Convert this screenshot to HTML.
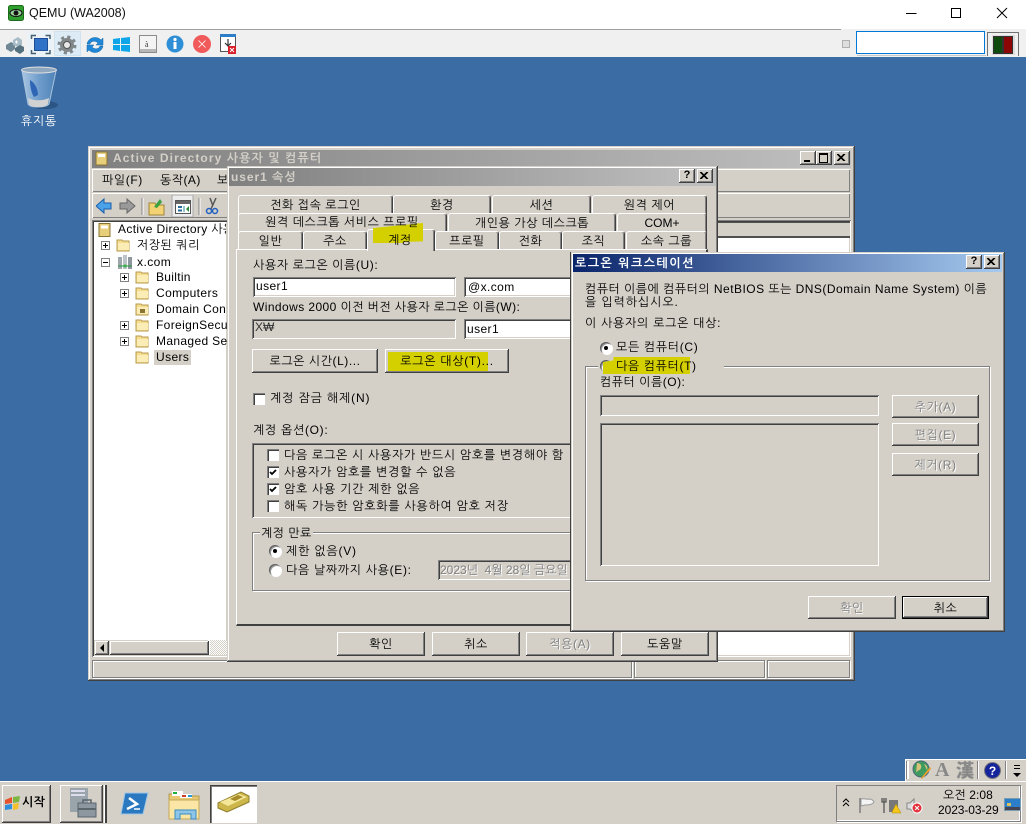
<!DOCTYPE html>
<html lang="ko"><head><meta charset="utf-8"><title>QEMU (WA2008)</title>
<style>
html,body{margin:0;padding:0}
body{width:1026px;height:824px;position:relative;overflow:hidden;background:#3b6ca3;font-family:"Liberation Sans","NanumGothic","Noto Sans CJK KR",sans-serif;font-size:12px;color:#000}
div,svg,span.a{position:absolute}
.t{position:absolute;white-space:nowrap;line-height:14px;height:14px}
.c{text-align:center}
.bg{background:#d4d0c8}
.win{background:#d4d0c8;box-shadow:inset -1px -1px #404040,inset 1px 1px #d4d0c8,inset -2px -2px #808080,inset 2px 2px #fff}
.btn{background:#d4d0c8;box-shadow:inset -1px -1px #404040,inset 1px 1px #fff,inset -2px -2px #808080;text-align:center;line-height:24px;letter-spacing:.6px}
.sunk{background:#fff;box-shadow:inset 1px 1px #808080,inset -1px -1px #fff,inset 2px 2px #404040,inset -2px -2px #d4d0c8}
.etch{border:1px solid #808080;box-shadow:1px 1px #fff,inset 1px 1px #fff;box-sizing:border-box;background:transparent}
.tab{background:#d4d0c8;border-top:1px solid #fff;border-left:1px solid #fff;border-right:1px solid #404040;box-shadow:inset -1px 0 #808080;border-radius:3px 3px 0 0;box-sizing:border-box;text-align:center;line-height:18px;letter-spacing:.55px}
.hl{background:#d4d000}
.dis{color:#808080;text-shadow:1px 1px #fff}
.cb{width:12px;height:12px;background:#fff;box-shadow:inset 1px 1px #808080,inset 2px 2px #404040,inset -1px -1px #fff}
.rd{width:12px;height:12px;border-radius:50%;background:#fff;box-shadow:inset 1px 1px #606060,inset 2px 2px #9a9a9a,1px 1px #fff}
.dot{left:4px;top:4px;width:4px;height:4px;border-radius:50%;background:#000}
.cap{width:16px;height:14px;background:#d4d0c8;box-shadow:inset -1px -1px #404040,inset 1px 1px #fff,inset -2px -2px #808080;font:bold 11px/13px "Liberation Sans",sans-serif;text-align:center}
.pm{width:9px;height:9px;background:#fff;border:1px solid #808080;box-sizing:border-box}
.pm:before{content:"";position:absolute;left:1px;top:3px;width:5px;height:1px;background:#000}
.pm.p:after{content:"";position:absolute;left:3px;top:1px;width:1px;height:5px;background:#000}
</style></head><body>
<svg width="0" height="0" style="left:0;top:0"><defs>
<symbol id="folder" viewBox="0 0 15 14"><path d="M1 2h5l1 1h6v10H1z" fill="#f6dc8f" stroke="#b79b4e"/><path d="M2 5h11v7H2z" fill="#fcedb7"/></symbol>
<symbol id="x" viewBox="0 0 9 7"><path d="M0 0l7 7M1 0l7 7M7 0L0 7M8 0L1 7" stroke="#000" fill="none"/></symbol>
</defs></svg>

<!-- top chrome -->
<div style="left:0;top:0;width:1026px;height:29px;background:#fff"></div>
<div style="left:0;top:29px;width:841px;height:1px;background:#a0a0a0"></div>
<div style="left:841px;top:29px;width:185px;height:1px;background:#f0f0f0"></div>
<div style="left:0;top:30px;width:1026px;height:27px;background:#f0f0f0"></div>
<svg style="left:8px;top:5px" width="16" height="16" viewBox="0 0 16 16"><rect x="0.5" y="0.5" width="15" height="15" rx="2" fill="#2f9e2f" stroke="#1b6a1b"/><ellipse cx="8" cy="8" rx="6" ry="3.5" fill="#9fd49f" stroke="#111"/><circle cx="8" cy="8" r="2.5" fill="#111"/></svg>
<div class="t" style="left:29px;top:6px;font-size:12.5px;color:#111">QEMU (WA2008)</div>
<svg style="left:900px;top:0" width="120" height="26" viewBox="0 0 120 26" fill="none" stroke="#000"><path d="M6 13.5H16.5"/><rect x="51.5" y="8.5" width="9" height="9"/><path d="M97 8l10 10M107 8l-10 10"/></svg>

<!-- toolbar icons -->
<div style="left:27px;top:31px;width:26px;height:25px;background:#eaf1f7"></div>
<div style="left:54px;top:31px;width:27px;height:25px;background:#dcebf5;box-shadow:inset 0 0 0 1px #cfe2f0"></div>
<svg style="left:4px;top:34px" width="240" height="22" viewBox="0 0 240 22">
<path d="M2 11l5-3 4 2v5l-4 3-5-3z" fill="#6f8794"/><path d="M9 6l5-3 4 3v5l-4 2-5-2z" fill="#a8bcc8"/><path d="M11 14l5-3 4 2v4l-4 3-5-3z" fill="#55707e"/><path d="M11 8h3M12.500 6.500v3" stroke="#fff"/>
<rect x="30.500" y="4.500" width="13" height="12" fill="#2f72c8" stroke="#1d4e95"/><path d="M27.500 5V1.500H32M41.500 1.500H46V5M46 16v3.500h-4.500M32 19.500h-4.500V16" fill="none" stroke="#45606f" stroke-width="1.500"/>
<circle cx="63" cy="11" r="7" fill="#82878a"/><circle cx="63" cy="11" r="8" fill="none" stroke="#82878a" stroke-width="3" stroke-dasharray="3.100 3.180"/><circle cx="63" cy="11" r="3.500" fill="#e8e8e8" stroke="#555"/>
<path d="M83 10c1-6 9-9 14-4l2-2v7h-7l2-2c-3-3-7-2-8 1zM99 12c-1 6-9 9-14 4l-2 2v-7h7l-2 2c3 3 7 2 8-1z" fill="#1f87d8" stroke="#14659f" stroke-width=".5"/>
<path d="M109 5l7-1v6h-7zM117 4l9-1v7h-9zM109 11h7v6l-7-1zM117 11h9v7l-9-1z" fill="#0ea5e9"/>
<rect x="135.500" y="1.500" width="17" height="17" fill="#f4f4f4" stroke="#8c8c8c"/><rect x="136" y="15" width="16" height="3" fill="#b8b8b8"/><text x="141" y="13" font-size="8" font-family="Liberation Serif" fill="#333">à</text>
<circle cx="171" cy="10" r="8.500" fill="#2f8fd6"/><rect x="169.500" y="8" width="3" height="7" fill="#fff"/><circle cx="171" cy="5.500" r="1.600" fill="#fff"/>
<circle cx="198" cy="10" r="9" fill="#f05a5a"/><path d="M194.500 6.500l7 7M201.500 6.500l-7 7" stroke="#fff" stroke-width=".8"/>
<rect x="216.500" y="0.500" width="15" height="17" fill="#fff" stroke="#555"/><rect x="216" y="0" width="16" height="3" fill="#2f7fc8"/><path d="M224 5v7M221 9l3 3 3-3" stroke="#333" fill="none" stroke-width="1.200"/><rect x="224" y="12" width="8" height="8" fill="#d8202a"/><path d="M226 14l4 4M230 14l-4 4" stroke="#fff"/>
</svg>
<div style="left:842px;top:40px;width:6px;height:6px;border:1px solid #b0b0b0;background:#dedede"></div>
<div style="left:856px;top:31px;width:127px;height:21px;border:1px solid #0078d7;background:#fff"></div>
<div style="left:857px;top:55px;width:129px;height:1px;background:#c8c8c8"></div>
<div style="left:987px;top:32px;width:32px;height:24px;border-top:1px solid #707070;border-left:1px solid #707070;border-right:1px solid #707070;box-sizing:border-box;background:#f0f0f0"></div>
<div style="left:992px;top:35px;width:23px;height:20px;background:#dcdcdc"></div>
<div style="left:994px;top:37px;width:8px;height:16px;background:#0f4a0f;box-shadow:0 0 0 1px #333"></div>
<div style="left:1004px;top:37px;width:8px;height:16px;background:#8c0606;box-shadow:0 0 0 1px #333"></div>

<!-- desktop icon -->
<svg style="left:20px;top:65px" width="38" height="46" viewBox="0 0 38 46">
<defs><linearGradient id="bin" x1="0" x2="1" y1="0" y2="0"><stop offset="0" stop-color="#a9c6e2"/><stop offset=".5" stop-color="#6f9dcb"/><stop offset="1" stop-color="#4f82b8"/></linearGradient></defs>
<ellipse cx="24" cy="40" rx="14" ry="4" fill="#2b5585"/>
<path d="M2 6L8 39c2 4 18 4 21 0L36 6z" fill="url(#bin)" stroke="#a9c4de"/>
<path d="M10 15c5 3 8 9 8 15l-4 2c-3-5-4-11-4-17z" fill="#2e66b5"/>
<path d="M8 33c6 3 14 3 21 0l-1 6c-3 4-17 4-19 0z" fill="#d2d2d2"/>
<ellipse cx="19" cy="5" rx="17.500" ry="3" fill="#8fa8bf" stroke="#e0e0e0"/>
</svg>
<div class="t c" style="left:9px;top:114px;width:60px;color:#fff;font-size:12px;letter-spacing:.8px">휴지통</div>

<!-- AD window -->
<div class="win" style="left:88px;top:146px;width:767px;height:535px"></div>
<div style="left:92px;top:150px;width:759px;height:18px;background:linear-gradient(90deg,#808080,#c0c0c0)"></div>
<svg style="left:95px;top:151px" width="14" height="15" viewBox="0 0 14 15"><rect x="1" y="1" width="11" height="13" fill="#e8cf7c" stroke="#8a7434"/><rect x="3" y="3" width="7" height="3" fill="#fff"/></svg>
<div class="t" style="left:113px;top:151px;font-weight:bold;color:#d4d0c8;letter-spacing:1.08px">Active Directory 사용자 및 컴퓨터</div>
<div class="cap" style="left:800px;top:151px;"><div style="left:4px;top:9px;width:6px;height:2px;background:#000"></div></div>
<div class="cap" style="left:816px;top:151px"><div style="left:3px;top:2px;width:7px;height:7px;border:1px solid #000;border-top-width:2px"></div></div>
<div class="cap" style="left:834px;top:151px"><svg style="left:3px;top:3px" width="9" height="7"><use href="#x"/></svg></div>
<div style="left:92px;top:169px;width:758px;height:23px;box-shadow:inset 1px 1px #fff,inset -1px -1px #808080"></div>
<div style="left:92px;top:193px;width:758px;height:25px;box-shadow:inset 1px 1px #fff,inset -1px -1px #808080"></div>
<div class="t" style="left:102px;top:173px;letter-spacing:.6px">파일(F)</div>
<div class="t" style="left:160px;top:173px;letter-spacing:.45px">동작(A)</div>
<div class="t" style="left:217px;top:173px">보</div>
<svg style="left:96px;top:195px" width="130" height="22" viewBox="0 0 130 22">
<path d="M0 11l8-7v4h7v6H8v4z" fill="#4aa3e8" stroke="#1c5ea8"/>
<path d="M39 11l-8-7v4h-7v6h7v4z" fill="#9a9a9a" stroke="#666"/>
<path d="M46 3v17" stroke="#808080"/><path d="M47 3v17" stroke="#fff"/>
<path d="M53 8h6l1 2h8v10H53z" fill="#f2d272" stroke="#a0853a"/><path d="M58 12l6-8 2 3-5 6z" fill="#3aa040"/>
<rect x="76" y="0" width="21" height="22" fill="#ececec" stroke="#a8a8a8"/><rect x="79.500" y="5.500" width="15" height="13" fill="#fff" stroke="#555"/><rect x="80" y="6" width="14" height="3" fill="#666"/><path d="M88 11v6" stroke="#2a8a9a"/><path d="M93 11l-3 3 3 3z" fill="#2a8a3a"/><rect x="82" y="11" width="4" height="2" fill="#2a6a9a"/><rect x="82" y="14.500" width="4" height="2" fill="#2a6a9a"/>
<path d="M103 3v17" stroke="#808080"/><path d="M104 3v17" stroke="#fff"/>
<path d="M120 3l-5 11M114 3l3 8" stroke="#555" stroke-width="1.500"/><circle cx="113" cy="16" r="2.500" fill="none" stroke="#2060c0" stroke-width="1.500"/><circle cx="119" cy="16" r="2.500" fill="none" stroke="#2060c0" stroke-width="1.500"/>
</svg>

<!-- tree -->
<div class="sunk" style="left:92px;top:220px;width:136px;height:437px"></div>
<svg style="left:98px;top:223px" width="14" height="14" viewBox="0 0 14 14"><rect x="1" y="0.500" width="11" height="13" fill="#e8cf7c" stroke="#8a7434"/><rect x="3" y="2.500" width="7" height="3" fill="#fff"/></svg>
<div class="t" style="left:118px;top:222px;letter-spacing:.35px;width:108px;overflow:hidden">Active Directory 사용</div>
<div class="pm p" style="left:101px;top:241px"></div>
<svg style="left:116px;top:238px" width="15" height="14"><use href="#folder"/></svg>
<div class="t" style="left:137px;top:238px;letter-spacing:.5px">저장된 쿼리</div>
<div class="pm" style="left:101px;top:258px"></div>
<svg style="left:117px;top:254px" width="16" height="16" viewBox="0 0 16 16"><rect x="1" y="3" width="4" height="12" fill="#9da7ad"/><rect x="6" y="1" width="4" height="14" fill="#bcc4c9"/><rect x="11" y="3" width="4" height="12" fill="#8d979d"/><path d="M1 12h14" stroke="#2a9a3a"/><circle cx="8" cy="12" r="1.500" fill="#38b048"/></svg>
<div class="t" style="left:137px;top:255px;letter-spacing:.45px">x.com</div>
<div class="pm p" style="left:120px;top:273px"></div>
<svg style="left:135px;top:270px" width="15" height="14"><use href="#folder"/></svg>
<div class="t" style="left:156px;top:270px;letter-spacing:.3px">Builtin</div>
<div class="pm p" style="left:120px;top:289px"></div>
<svg style="left:135px;top:286px" width="15" height="14"><use href="#folder"/></svg>
<div class="t" style="left:156px;top:286px;letter-spacing:.4px">Computers</div>
<svg style="left:135px;top:302px" width="15" height="14"><use href="#folder"/><rect x="5" y="7" width="5" height="4" fill="#8a7434"/></svg>
<div class="t" style="left:156px;top:302px;letter-spacing:.35px;width:71px;overflow:hidden">Domain Con</div>
<div class="pm p" style="left:120px;top:321px"></div>
<svg style="left:135px;top:318px" width="15" height="14"><use href="#folder"/></svg>
<div class="t" style="left:156px;top:318px;letter-spacing:.35px;width:71px;overflow:hidden">ForeignSecu</div>
<div class="pm p" style="left:120px;top:337px"></div>
<svg style="left:135px;top:334px" width="15" height="14"><use href="#folder"/></svg>
<div class="t" style="left:156px;top:334px;letter-spacing:.35px;width:71px;overflow:hidden">Managed Se</div>
<svg style="left:135px;top:350px" width="15" height="14"><use href="#folder"/></svg>
<div style="left:154px;top:350px;width:37px;height:15px;background:#d4d0c8"></div>
<div class="t" style="left:156px;top:350px;letter-spacing:.4px">Users</div>
<!-- tree scrollbar -->
<div style="left:94px;top:640px;width:114px;height:15px;background:#d4d0c8"></div>
<div class="btn" style="left:95px;top:641px;width:14px;height:14px"><div style="left:5px;top:3px;width:0;height:0;border:4px solid transparent;border-right-color:#000;border-left:0"></div></div>
<div class="btn" style="left:110px;top:641px;width:99px;height:14px"></div>
<div style="left:210px;top:640px;width:17px;height:15px;background:repeating-conic-gradient(#fff 0 25%,#d4d0c8 0 50%) 0 0/2px 2px"></div>

<!-- right list -->
<div class="sunk" style="left:716px;top:220px;width:135px;height:437px"></div>
<div style="left:716px;top:222px;width:134px;height:16px;background:#d4d0c8;border-top:1px solid #505050;border-bottom:2px solid #505050;box-sizing:border-box"></div>
<!-- status bar -->
<div class="etch" style="left:92px;top:660px;width:540px;height:18px"></div>
<div class="etch" style="left:634px;top:660px;width:131px;height:18px"></div>
<div class="etch" style="left:767px;top:660px;width:83px;height:18px"></div>

<!-- properties dialog -->
<div class="win" style="left:227px;top:166px;width:491px;height:496px"></div>
<div style="left:229px;top:168px;width:487px;height:18px;background:linear-gradient(90deg,#808080,#c0c0c0)"></div>
<div class="t" style="left:231px;top:170px;font-weight:bold;color:#d4d0c8;letter-spacing:.95px">user1 속성</div>
<div class="cap" style="left:679px;top:169px">?</div>
<div class="cap" style="left:697px;top:169px"><svg style="left:3px;top:3px" width="9" height="7"><use href="#x"/></svg></div>

<div class="tab" style="left:238px;top:195px;width:155px;height:20px">전화 접속 로그인</div>
<div class="tab" style="left:393px;top:195px;width:98px;height:20px">환경</div>
<div class="tab" style="left:492px;top:195px;width:99px;height:20px">세션</div>
<div class="tab" style="left:592px;top:195px;width:115px;height:20px">원격 제어</div>
<div class="tab" style="left:238px;top:213px;width:209px;height:20px"></div>
<div class="tab" style="left:448px;top:213px;width:168px;height:20px">개인용 가상 데스크톱</div>
<div class="tab" style="left:617px;top:213px;width:90px;height:20px;letter-spacing:0">COM+</div>
<div class="tab" style="left:238px;top:231px;width:65px;height:19px">일반</div>
<div class="tab" style="left:303px;top:231px;width:64px;height:19px">주소</div>
<div class="tab" style="left:435px;top:231px;width:64px;height:19px">프로필</div>
<div class="tab" style="left:499px;top:231px;width:63px;height:19px">전화</div>
<div class="tab" style="left:562px;top:231px;width:63px;height:19px">조직</div>
<div class="tab" style="left:626px;top:231px;width:81px;height:19px">소속 그룹</div>
<!-- tab panel -->
<div style="left:236px;top:249px;width:472px;height:377px;background:#d4d0c8;box-sizing:border-box;border-top:1px solid #fff;border-left:1px solid #fff;border-right:2px solid #404040;border-bottom:2px solid #404040"></div>
<div class="tab" style="left:367px;top:229px;width:68px;height:22px;border-radius:3px 3px 0 0"></div>
<div class="hl" style="left:373px;top:223px;width:50px;height:20px;clip-path:polygon(0 25%,100% 0,100% 92%,60% 95%,60% 100%,0 100%)"></div>
<div class="t c" style="left:238px;top:215px;width:208px;letter-spacing:.55px">원격 데스크톱 서비스 프로필</div>
<div class="t c" style="left:367px;top:233px;width:66px;letter-spacing:.55px">계정</div>

<div class="t" style="left:253px;top:258px;letter-spacing:.6px">사용자 로그온 이름(U):</div>
<div class="sunk t" style="left:253px;top:277px;width:203px;height:20px;line-height:19px;text-indent:3px;letter-spacing:.4px">user1</div>
<div class="sunk t" style="left:464px;top:277px;width:108px;height:20px;line-height:20px;text-indent:4px;letter-spacing:.4px">@x.com</div>
<div class="t" style="left:253px;top:300px;letter-spacing:.42px">Windows 2000 이전 버전 사용자 로그온 이름(W):</div>
<div class="sunk t" style="left:252px;top:319px;width:204px;height:20px;line-height:17px;text-indent:3px;background:#d4d0c8;color:#333">X₩</div>
<div class="sunk t" style="left:464px;top:319px;width:108px;height:20px;line-height:20px;text-indent:3px;letter-spacing:.4px">user1</div>
<div class="btn" style="left:252px;top:349px;width:126px;height:24px;letter-spacing:.55px">로그온 시간(L)...</div>
<div class="btn" style="left:385px;top:349px;width:124px;height:24px"></div>
<div class="hl" style="left:388px;top:352px;width:100px;height:19px"></div>
<div class="t c" style="left:385px;top:354px;width:124px;letter-spacing:.7px">로그온 대상(T)...</div>
<div class="cb" style="left:253px;top:393px"></div>
<div class="t" style="left:270px;top:391px;letter-spacing:.85px">계정 잠금 해제(N)</div>
<div class="t" style="left:253px;top:423px;letter-spacing:.7px">계정 옵션(O):</div>
<div class="sunk" style="left:252px;top:443px;width:320px;height:75px;background:#d4d0c8"></div>
<div class="cb" style="left:267px;top:449px"></div><div class="t" style="left:284px;top:448px;letter-spacing:.7px">다음 로그온 시 사용자가 반드시 암호를 변경해야 함</div>
<div class="cb" style="left:267px;top:466px"><svg width="12" height="12" style="left:0;top:0"><path d="M3 6l2 2 4-4" fill="none" stroke="#000" stroke-width="1.800"/></svg></div><div class="t" style="left:284px;top:465px;letter-spacing:.72px">사용자가 암호를 변경할 수 없음</div>
<div class="cb" style="left:267px;top:483px"><svg width="12" height="12" style="left:0;top:0"><path d="M3 6l2 2 4-4" fill="none" stroke="#000" stroke-width="1.800"/></svg></div><div class="t" style="left:284px;top:482px;letter-spacing:.72px">암호 사용 기간 제한 없음</div>
<div class="cb" style="left:267px;top:500px"></div><div class="t" style="left:284px;top:499px;letter-spacing:.74px">해독 가능한 암호화를 사용하여 암호 저장</div>
<div class="etch" style="left:252px;top:532px;width:320px;height:59px"></div>
<div class="t bg" style="left:260px;top:526px;padding:0 1px;letter-spacing:.45px">계정 만료</div>
<div class="rd" style="left:269px;top:545px"><div class="dot"></div></div>
<div class="t" style="left:286px;top:544px;letter-spacing:.8px">제한 없음(V)</div>
<div class="rd" style="left:269px;top:564px"></div>
<div class="t" style="left:286px;top:563px;letter-spacing:.67px">다음 날짜까지 사용(E):</div>
<div class="sunk t" style="left:438px;top:560px;width:134px;height:20px;line-height:20px;text-indent:2px;background:#d4d0c8;color:#808080;overflow:hidden;text-shadow:1px 1px #fff">2023년&nbsp; 4월 28일 금요일</div>
<div class="btn" style="left:337px;top:632px;width:88px;height:24px">확인</div>
<div class="btn" style="left:432px;top:632px;width:88px;height:24px">취소</div>
<div class="btn dis" style="left:526px;top:632px;width:88px;height:24px">적용(A)</div>
<div class="btn" style="left:621px;top:632px;width:88px;height:24px">도움말</div>

<!-- logon workstation dialog -->
<div class="win" style="left:571px;top:252px;width:434px;height:380px;box-shadow:inset -1px -1px #404040,inset 1px 1px #d4d0c8,inset -2px -2px #808080,inset 2px 2px #fff,-1px 0 #404040"></div>
<div style="left:573px;top:254px;width:429px;height:18px;background:linear-gradient(90deg,#0a246a,#a6caf0)"></div>
<div class="t" style="left:575px;top:256px;font-weight:bold;color:#fff;letter-spacing:1.5px">로그온 워크스테이션</div>
<div class="cap" style="left:966px;top:255px">?</div>
<div class="cap" style="left:984px;top:255px"><svg style="left:3px;top:3px" width="9" height="7"><use href="#x"/></svg></div>
<div class="t" style="left:585px;top:282px;letter-spacing:.47px">컴퓨터 이름에 컴퓨터의 NetBIOS 또는 DNS(Domain Name System) 이름</div>
<div class="t" style="left:585px;top:295px;letter-spacing:.9px">을 입력하십시오.</div>
<div class="t" style="left:585px;top:316px;letter-spacing:.72px">이 사용자의 로그온 대상:</div>
<div class="rd" style="left:600px;top:342px"><div class="dot"></div></div>
<div class="t" style="left:616px;top:340px;letter-spacing:.67px">모든 컴퓨터(C)</div>
<div class="etch" style="left:585px;top:366px;width:405px;height:215px"></div>
<div class="bg" style="left:598px;top:358px;width:126px;height:16px"></div>
<div class="rd" style="left:600px;top:360px"></div>
<div class="hl" style="left:603px;top:357px;width:87px;height:17px;clip-path:polygon(0 30%,12% 20%,12% 0,100% 0,100% 100%,0 100%)"></div>
<div class="t" style="left:616px;top:359px;letter-spacing:.62px">다음 컴퓨터(T)</div>
<div class="t" style="left:600px;top:375px;letter-spacing:.5px">컴퓨터 이름(O):</div>
<div class="sunk" style="left:600px;top:395px;width:279px;height:21px;background:#d4d0c8"></div>
<div class="sunk" style="left:600px;top:423px;width:279px;height:143px;background:#d4d0c8"></div>
<div class="btn dis" style="left:892px;top:395px;width:87px;height:23px">추가(A)</div>
<div class="btn dis" style="left:892px;top:423px;width:87px;height:23px">편집(E)</div>
<div class="btn dis" style="left:892px;top:453px;width:87px;height:23px">제거(R)</div>
<div class="btn dis" style="left:808px;top:596px;width:88px;height:23px">확인</div>
<div class="btn" style="left:902px;top:596px;width:87px;height:23px;box-shadow:inset 0 0 0 1px #000,inset -2px -2px #404040,inset 2px 2px #fff,inset -3px -3px #808080">취소</div>

<!-- taskbar -->
<div style="left:0;top:781px;width:1026px;height:43px;background:#d4d0c8;border-top:1px solid #fff;box-sizing:border-box"></div>
<div class="btn" style="left:2px;top:785px;width:49px;height:38px"></div>
<svg style="left:4px;top:795px" width="17" height="16" viewBox="0 0 17 16"><path d="M1 5l7-3v6l-7 1z" fill="#e8512a"/><path d="M9 2l7-1-1 6-6 1z" fill="#7cb542"/><path d="M1 10l7-1v5l-7 1z" fill="#2f8fdc"/><path d="M9 9l6-1-1 6-5 1z" fill="#f5c02c"/></svg>
<div class="t" style="left:22px;top:795px;font-weight:bold;letter-spacing:.4px;font-size:12px">시작</div>
<div class="btn" style="left:60px;top:785px;width:43px;height:38px"></div>
<div style="left:105px;top:785px;width:2px;height:38px;background:#404040;box-shadow:-1px 0 #fff"></div>
<svg style="left:68px;top:787px" width="30" height="34" viewBox="0 0 30 34"><rect x="2" y="1" width="18" height="24" fill="#9aa4ab"/><rect x="3" y="3" width="14" height="2" fill="#dde"/><rect x="3" y="7" width="14" height="2" fill="#dde"/><rect x="10" y="16" width="18" height="14" fill="#8c979f" stroke="#5a656c"/><path d="M15 16v-3h8v3" fill="none" stroke="#5a656c" stroke-width="1.500"/><rect x="10" y="21" width="18" height="2" fill="#5a656c"/></svg>
<svg style="left:120px;top:792px" width="29" height="24" viewBox="0 0 29 24"><path d="M5 1h23l-5 21H1z" fill="#2a78c0" stroke="#9cc6e6"/><path d="M9 6l8 6-10 5" fill="none" stroke="#fff" stroke-width="2.500"/><path d="M14 17h6" stroke="#fff" stroke-width="1.500"/></svg>
<svg style="left:168px;top:790px" width="33" height="30" viewBox="0 0 33 30"><path d="M1 4h10l2 2h18v23H1z" fill="#e6c874" stroke="#b59a4c"/><rect x="4" y="1" width="11" height="5" fill="#fff"/><rect x="5" y="2" width="4" height="2" fill="#20b040"/><rect x="12" y="4" width="12" height="4" fill="#fff"/><rect x="14" y="5" width="4" height="2" fill="#d03a2a"/><rect x="20" y="5" width="4" height="2" fill="#2a98d8"/><path d="M1 10h30v19H1z" fill="#fbe6a6" stroke="#c4a858"/><path d="M7 29v-9h21v9h-5v-5H12v5z" fill="#8ec5e8" stroke="#3a8cc0"/></svg>
<div style="left:210px;top:785px;width:47px;height:38px;background:#fff;box-shadow:inset 1px 1px #404040,inset 2px 2px #808080,inset -1px -1px #fff"></div>
<svg style="left:217px;top:791px" width="33" height="22" viewBox="0 0 33 22"><path d="M1 12L24 1l8 4v6L10 21l-9-4z" fill="#cdb74c" stroke="#8e7c28"/><path d="M3 11L22 3l8 3L11 15z" fill="#f4e79a"/><path d="M13 8l8-4 5 2-8 4z" fill="#a78a2a"/></svg>

<!-- language bar -->
<div style="left:905px;top:759px;width:121px;height:22px;background:#d4d0c8;box-shadow:inset 1px 1px #fff"></div>
<div style="left:907px;top:761px;width:2px;height:18px;background:#fff;box-shadow:-1px 0 #808080"></div>
<svg style="left:912px;top:760px" width="20" height="20" viewBox="0 0 20 20"><circle cx="9" cy="9" r="8" fill="#3e9a5e" stroke="#4d6a7a"/><path d="M5 3c3 0 5 2 4 5s-4 2-5 5M12 4c3 1 4 4 3 6" fill="#d9c27a"/><path d="M9 18l9-11 1 2-9 10z" fill="#e8a030"/></svg>
<div class="t" style="left:935px;top:761px;font:bold 20px/19px 'Liberation Serif',serif;color:#888;height:19px">A</div>
<div class="t" style="left:956px;top:761px;font:bold 18px/19px 'Noto Sans CJK KR',sans-serif;color:#888;height:19px;text-shadow:0 0 1px #888">漢</div>
<div style="left:977px;top:761px;width:1px;height:18px;background:#808080;box-shadow:1px 0 #fff"></div>
<svg style="left:984px;top:762px" width="17" height="17" viewBox="0 0 17 17"><circle cx="8.500" cy="8.500" r="8" fill="#16249c" stroke="#777"/><text x="8.500" y="13" font-size="12" font-weight="bold" font-family="Liberation Sans" fill="#fff" text-anchor="middle">?</text></svg>
<div style="left:1005px;top:761px;width:1px;height:18px;background:#808080;box-shadow:1px 0 #fff"></div>
<div style="left:1014px;top:765px;width:6px;height:1px;background:#000"></div>
<div style="left:1014px;top:768px;width:6px;height:1px;background:#000"></div>
<div style="left:1013px;top:773px;width:0;height:0;border:4px solid transparent;border-top-color:#000;border-bottom:0"></div>

<!-- tray -->
<div style="left:836px;top:785px;width:185px;height:37px;box-sizing:border-box;border:1px solid #808080;box-shadow:inset -1px -1px #fff,1px 1px #fff"></div>
<svg style="left:842px;top:797px" width="82" height="18" viewBox="0 0 82 18" fill="none">
<path d="M1 5l3-3 3 3M1 9l3-3 3 3" stroke="#000"/>
<path d="M18 1v15" stroke="#777" stroke-width="1.400"/><path d="M19 2c4-1 6 1 9 0 2 0 4 3 4 3-2 3-6 3-9 3l-4 1z" fill="#f4f4f4" stroke="#999"/>
<rect x="47" y="3" width="9" height="12" fill="#777"/><path d="M42 1v8M40 1v4h4V1M42 9v7" stroke="#555" stroke-width="1.300"/><path d="M50 15l4-8 5 9h-9z" fill="#f5c518" stroke="#a88a10" stroke-width=".5"/>
<path d="M65 6h3l4-4v13l-4-3h-3z" fill="#dcdcdc" stroke="#888"/><circle cx="75" cy="11" r="5" fill="#e0303a" stroke="#fff"/><path d="M73 9l4 4M77 9l-4 4" stroke="#fff"/>
</svg>
<div class="t" style="left:943px;top:788px;letter-spacing:.1px">오전 2:08</div>
<div class="t" style="left:938px;top:803px;letter-spacing:-.08px">2023-03-29</div>
<svg style="left:1004px;top:798px" width="17" height="14" viewBox="0 0 17 14"><rect x="0.500" y="0.500" width="16" height="12" fill="#2b7ec8" stroke="#7a9ab0"/><rect x="1" y="9" width="15" height="3" fill="#445"/><rect x="3" y="5" width="4" height="3" fill="#d8c060"/></svg>
</body></html>
